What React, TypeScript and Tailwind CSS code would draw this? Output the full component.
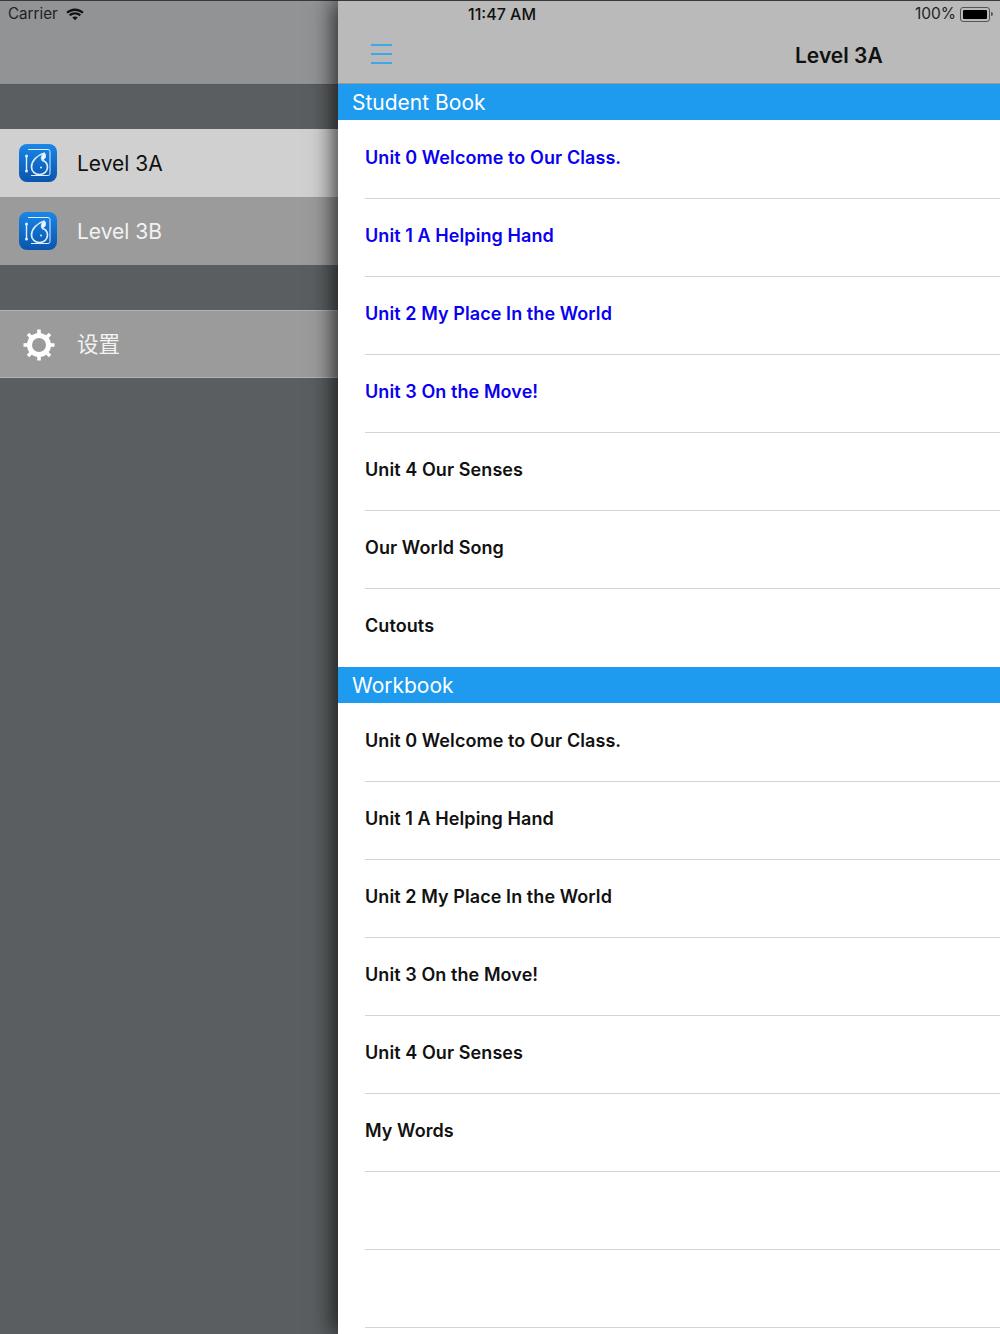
const font = "font-['Inter','Noto_Sans_CJK_SC',sans-serif]";

const studentBook = [
  { label: "Unit 0 Welcome to Our Class.", active: true },
  { label: "Unit 1 A Helping Hand", active: true },
  { label: "Unit 2 My Place In the World", active: true },
  { label: "Unit 3 On the Move!", active: true },
  { label: "Unit 4 Our Senses", active: false },
  { label: "Our World Song", active: false },
  { label: "Cutouts", active: false },
];

const workbook = [
  "Unit 0 Welcome to Our Class.",
  "Unit 1 A Helping Hand",
  "Unit 2 My Place In the World",
  "Unit 3 On the Move!",
  "Unit 4 Our Senses",
  "My Words",
  "",
  "",
];

function AppIcon() {
  return (
    <div className="flex h-[38px] w-[38px] items-center justify-center rounded-[8px] bg-gradient-to-b from-[#1b86e6] to-[#0a55ad]">
      <svg viewBox="0 0 38 38" className="h-[38px] w-[38px]" fill="none" stroke="#dcefff">
        <path d="M9 5.500h20a2 2 0 0 1 2 2v22a2 2 0 0 1-2 2H12" strokeWidth="1" />
        <path d="M7.500 13v14" strokeWidth="1.400" />
        <circle cx="7.500" cy="12" r="1.500" fill="#dcefff" stroke="none" />
        <circle cx="7.500" cy="27" r="1.500" fill="#dcefff" stroke="none" />
        <path d="M25.500 9C18 11 12.500 17 12.500 23c0 4.500 3.500 7.500 8 7.500s8-3.300 8-7.500c0-3.700-2.600-6.500-5.500-6.500" strokeWidth="1.700" />
        <path d="M25.500 9c1.800 2.500 1.200 6-2.500 7.500-1.500-2.500-.5-5.500 2.500-7.500z" fill="#eef7ff" strokeWidth="1" />
        <circle cx="22" cy="23.500" r="1" fill="#dcefff" stroke="none" />
      </svg>
    </div>
  );
}

function GearIcon() {
  return (
    <svg viewBox="0 0 32 32" className="h-8 w-8" fill="none">
      <circle cx="16" cy="16" r="9.500" stroke="#fff" strokeWidth="5" />
      <g stroke="#fff" strokeWidth="3.600">
        <path d="M16 .500v5" />
        <path d="M16 26.500v5" />
        <path d="M.500 16h5" />
        <path d="M26.500 16h5" />
        <path d="M5 5l3.500 3.500" />
        <path d="M23.500 23.500L27 27" />
        <path d="M5 27l3.500-3.500" />
        <path d="M23.500 8.500L27 5" />
      </g>
    </svg>
  );
}

function SideRow({ label, selected, icon, bordered }: { label: string; selected?: boolean; icon: React.ReactNode; bordered?: boolean }) {
  return (
    <div
      className={`flex h-[68px] items-center ${selected ? "bg-[#d0d0d0] text-[#111]" : "bg-[#9b9b9b] text-[#f2f2f2]"} ${bordered ? "border-y border-[#b4b4b4] pt-0.5" : ""}`}
    >
      <div className={`flex w-[77px] justify-center ${bordered ? "pl-px" : "pr-px"}`}>{icon}</div>
      <span className={`${bordered ? "text-[21.5px]" : "text-[21px]"} leading-none`}>{label}</span>
    </div>
  );
}

function SectionHeader({ title }: { title: string }) {
  return <div className="h-9 bg-[#1e9bee] pt-[6px] pl-3.5 text-[21px] leading-[26px] text-white">{title}</div>;
}

function ListRow({ label, active, first, last }: { label: string; active?: boolean; first?: boolean; last?: boolean }) {
  return (
    <div className={`ml-[27px] ${last ? "" : "border-b border-[#d4d4d4]"} ${first ? "h-[79px] pt-[26px]" : "h-[78px] pt-[25px]"}`}>
      <span className={`block text-[18px] leading-[24px] font-semibold tracking-[0.08px] ${active ? "text-[#0a00f0]" : "text-[#111]"}`}>{label}</span>
    </div>
  );
}

export default function App() {
  return (
    <div className={`flex h-[1334px] w-[1000px] overflow-hidden ${font}`}>
      <aside className="flex w-[338px] shrink-0 flex-col bg-[#5a5e60]">
        <div className="h-[85px] border-t border-t-[#3a3a3a] border-b border-b-[#55585a] bg-[#929394] pt-[4px] pl-2">
          <div className="flex items-center gap-[8px] text-[#222]">
            <span className="text-[15.2px] leading-[18px]">Carrier</span>
            <svg viewBox="0 0 20 14" className="h-[13px] w-[18px]" fill="#111">
              <path d="M10 3c-3 0-5.700 1-8 3L.3 4.200C3 1.600 6.300.300 10 .300s7 1.300 9.700 3.900L18 6c-2.300-2-5-3-8-3z" />
              <path d="M10 7c-1.900 0-3.600.7-5 1.900L3.300 7.100C5.100 5.400 7.400 4.500 10 4.500s4.900.9 6.700 2.600L15 8.900C13.600 7.700 11.900 7 10 7z" />
              <path d="M10 9.200c-1.200 0-2.200.4-3 1.100l3 3.200 3-3.200c-.8-.7-1.800-1.100-3-1.100z" />
            </svg>
          </div>
        </div>
        <div className="mt-[44px]">
          <SideRow label="Level 3A" selected icon={<AppIcon />} />
          <SideRow label="Level 3B" icon={<AppIcon />} />
        </div>
        <div className="mt-[45px]">
          <SideRow label="设置" bordered icon={<GearIcon />} />
        </div>
      </aside>

      <main className="relative z-10 flex flex-1 flex-col bg-white shadow-[-4px_0_22px_rgba(0,0,0,0.75)]">
        <header className="h-[84px] border-t border-t-[#3a3a3a] border-b border-b-[#9a9a9a] bg-[#bababa]">
          <div className="flex h-[26px] items-center text-[#111]">
            <span className="ml-[130px] text-[16px] font-medium">11:47 AM</span>
            <span className="ml-auto text-[15.5px] text-[#222]">100%</span>
            <div className="mr-[7px] ml-[4px] flex items-center">
              <div className="h-[15px] w-[30px] rounded-[3px] border border-[#555] p-[2px]">
                <div className="h-full w-full rounded-[1px] bg-black" />
              </div>
              <div className="ml-px h-1 w-[2px] rounded-r-sm bg-[#555]" />
            </div>
          </div>
          <div className="flex h-[56px] items-center">
            <div className="ml-[33px] flex w-[21px] flex-col gap-[7px] pb-[3px]">
              <div className="h-0.5 bg-[#3fa6e8]" />
              <div className="h-0.5 bg-[#3fa6e8]" />
              <div className="h-0.5 bg-[#3fa6e8]" />
            </div>
            <h1 className="ml-[403px] text-[21px] leading-none font-semibold text-[#111]">Level 3A</h1>
          </div>
        </header>

        <SectionHeader title="Student Book" />
        {studentBook.map((row, i) => (
          <ListRow key={i} label={row.label} active={row.active} first={i === 0} last={i === 6} />
        ))}

        <SectionHeader title="Workbook" />
        {workbook.map((label, i) => (
          <ListRow key={i} label={label} first={i === 0} />
        ))}
      </main>
    </div>
  );
}
